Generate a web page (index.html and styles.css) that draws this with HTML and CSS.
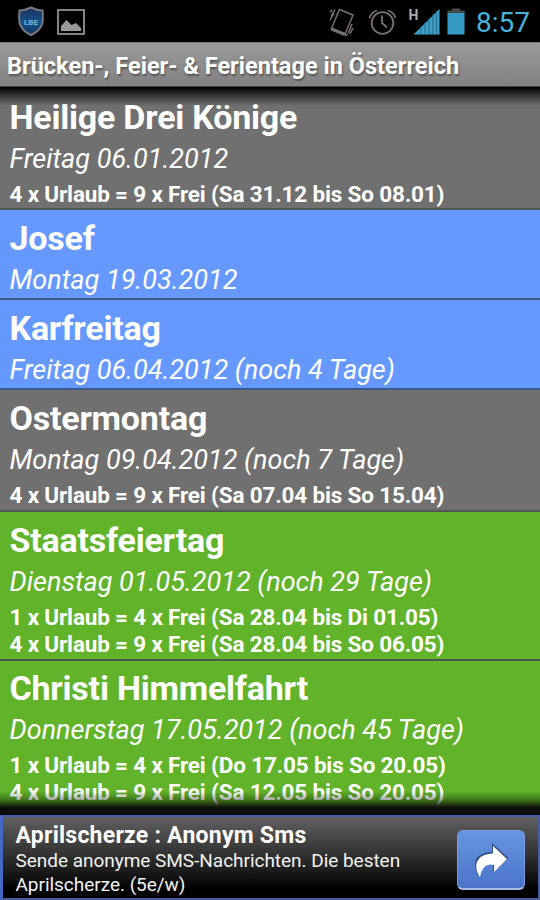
FILE: index.html
```
<!DOCTYPE html>
<html lang="de">
<head>
<meta charset="utf-8">
<title>Brücken-, Feier- &amp; Ferientage</title>
<link rel="stylesheet" href="styles.css">
</head>
<body>
<div class="status">
  <svg class="left-icons" width="100" height="42" viewBox="0 0 100 42">
    <defs><linearGradient id="sh" x1="0" y1="0" x2="0" y2="1"><stop offset="0" stop-color="#1a3158"/><stop offset=".5" stop-color="#17518c"/><stop offset="1" stop-color="#123564"/></linearGradient></defs>
    <path d="M19.500 10.500Q25 10.500 31 7.500Q37 10.500 42.500 10.500C43.500 21 44 29 31 35C18 29 18.500 21 19.500 10.500Z" fill="url(#sh)" stroke="#77777f" stroke-width="2"/>
    <text x="31" y="24.500" text-anchor="middle" class="badge">LBE</text>
    <rect x="58" y="10" width="26" height="24" fill="none" stroke="#999" stroke-width="1.700"/>
    <path d="M61 31V26L66.500 20L71.500 25L76 23L81 28V31Z" fill="#999"/>
  </svg>
  <svg class="right-icons" width="140" height="42" viewBox="325 0 140 42">
    <g fill="none" stroke="#77706c" stroke-width="1.500">
      <path d="M339.500 9.500L353 15L345 34.500L331.500 28.500Z"/>
      <path d="M331.500 29L345 34.500" stroke-width="3"/>
      <path d="M330 12L332.500 10M331 16.500L335 9.500M330 20L334 13M352 24L348.500 33M350 34L353 28M345.500 36L348 34"/>
      <circle cx="382.500" cy="23" r="10.800" stroke-width="1.800"/>
      <path d="M382 15.500V23L387 27.500" stroke-width="1.800"/>
      <path d="M369.500 18Q371 12.500 377 10.500M388 10.500Q394 12.500 395.500 18" stroke-width="1.800"/>
    </g>
    <path d="M413.500 34.500L439.500 9V34.500Z" fill="#3e9ec4"/>
    <path d="M421 26V35M425 22V35M429 18V35M433 14V35M436.500 11V35" stroke="#236b8b" stroke-width="1"/>
    <text x="408.500" y="19.500" class="net">H</text>
    <rect x="447.500" y="12" width="17" height="22.500" fill="#349bc5"/>
    <path d="M452 8.500H460V10.500H464.500V13H447.500V10.500H452Z" fill="#4a4a4a"/>
  </svg>
  <span class="clock">8:57</span>
</div>
<div class="titlebar"><span>Brücken-, Feier- &amp; Ferientage in Österreich</span></div>
<div class="list">
  <div class="item gray first"><h2>Heilige Drei Könige</h2><p class="date">Freitag 06.01.2012</p><p class="tip">4 x Urlaub = 9 x Frei (Sa 31.12 bis So 08.01)</p></div>
  <div class="item blue"><h2>Josef</h2><p class="date">Montag 19.03.2012</p></div>
  <div class="item blue"><h2>Karfreitag</h2><p class="date">Freitag 06.04.2012 (noch 4 Tage)</p></div>
  <div class="item gray"><h2>Ostermontag</h2><p class="date">Montag 09.04.2012 (noch 7 Tage)</p><p class="tip">4 x Urlaub = 9 x Frei (Sa 07.04 bis So 15.04)</p></div>
  <div class="item green"><h2>Staatsfeiertag</h2><p class="date">Dienstag 01.05.2012 (noch 29 Tage)</p><p class="tip">1 x Urlaub = 4 x Frei (Sa 28.04 bis Di 01.05)<br>4 x Urlaub = 9 x Frei (Sa 28.04 bis So 06.05)</p></div>
  <div class="item green last"><h2>Christi Himmelfahrt</h2><p class="date">Donnerstag 17.05.2012 (noch 45 Tage)</p><p class="tip">1 x Urlaub = 4 x Frei (Do 17.05 bis So 20.05)<br>4 x Urlaub = 9 x Frei (Sa 12.05 bis So 20.05)</p></div>
</div>
<div class="ad">
  <div class="ad-text"><p class="ad-title">Aprilscherze : Anonym Sms</p><p class="ad-body">Sende anonyme SMS-Nachrichten. Die besten<br>Aprilscherze. (5e/w)</p></div>
  <div class="ad-button">
    <svg width="66" height="58" viewBox="0 0 66 58">
      <path d="M34 12L50.500 27L35 41V33Q22 31 20 45Q10 22 34 21Z" fill="#273c70" opacity=".75"/>
      <path d="M35 15L49 28L36 41V34Q25 31 22 46C14 34 19 23 35 22.500Z" fill="#fff"/>
    </svg>
  </div>
</div>
</body>
</html>
```
FILE: styles.css
```
* { box-sizing: border-box; }
body { margin: 0; width: 540px; height: 900px; overflow: hidden; background: #0c0c0c; color: #fff; font-family: Roboto, "Liberation Sans", sans-serif; display: flex; flex-direction: column; }
h2, p { margin: 0; white-space: nowrap; }
.status { height: 42px; flex: none; display: flex; justify-content: space-between; background: #000; }
.left-icons { margin-right: auto; }
.badge { font: bold 8px Roboto, sans-serif; fill: #72b7d6; }
.net { font: bold 14px Roboto, sans-serif; fill: #aaa; }
.clock { width: 75px; padding-left: 11px; font-size: 28px; line-height: 46px; color: #45b3dc; }
.titlebar { height: 45px; flex: none; padding-left: 7px; background: linear-gradient(#999, #828282); border-top: 1px solid #777; border-bottom: 1px solid #444; font-size: 23.5px; font-weight: 700; line-height: 47px; letter-spacing: 0.02px; white-space: nowrap; text-shadow: 1px 2px 2px #555; }
.list { height: 720px; flex: none; position: relative; overflow: hidden; }
.list::before, .list::after { content: ""; position: absolute; left: 0; width: 100%; z-index: 1; }
.list::before { top: 0; height: 19px; background: linear-gradient(#000, rgba(0, 0, 0, .72) 25%, rgba(0, 0, 0, 0)); }
.list::after { bottom: 0; height: 16px; background: linear-gradient(rgba(0, 0, 0, 0), rgba(0, 0, 0, .3) 50%, rgba(8, 8, 8, .9)); }
.item { padding: 8px 9.5px 1px; border-bottom: 2px solid #4b5852; }
.item h2 { font-size: 34px; line-height: 40px; font-weight: 700; letter-spacing: -0.22px; }
.date { margin-top: 6px; font-size: 27px; line-height: 32px; font-style: italic; }
.tip { margin-top: 6px; font-size: 22.5px; line-height: 27px; font-weight: 700; letter-spacing: -0.17px; }
.gray { background: #707070; }
.blue { background: #6699ff; border-bottom-color: #3c5b8c; padding-bottom: 2px; }
.green { background: #61b329; }
.first { padding-top: 10px; }
.item.first { padding-bottom: 0; }
.last { padding-top: 7px; min-height: 155px; }
.ad { height: 85px; flex: none; margin-top: 8px; display: flex; justify-content: space-between; border: 2px solid #465ea0; border-left: 3px solid #4469c4; background: linear-gradient(#606060, #333 45%, #000 90%); padding: 0 13px 0 12.5px; }
.ad-text { padding-top: 5px; }
.ad-title { font-size: 23px; font-weight: 700; line-height: 27px; letter-spacing: 0.24px; }
.ad-body { font-size: 19px; line-height: 24px; color: #f2f2f2; letter-spacing: -0.03px; }
.ad-button { width: 68px; height: 60px; margin-top: 13px; border: 1px solid #7b9be0; border-bottom: 2px solid #a8bce8; border-radius: 6px; background: linear-gradient(#6795e2, #4a74c8); overflow: hidden; }
```
